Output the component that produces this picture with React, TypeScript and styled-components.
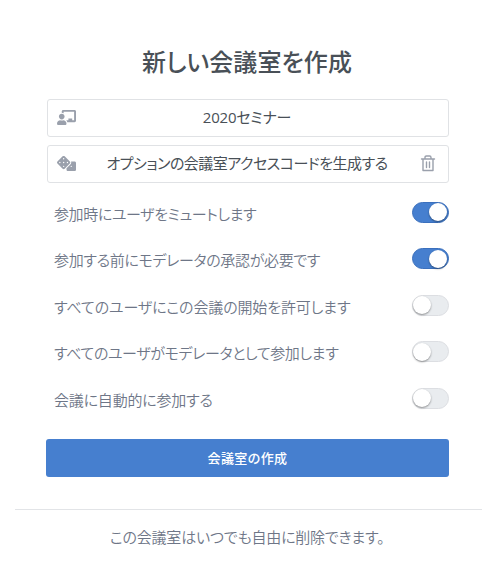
import React, { useState } from 'react';
import styled, { createGlobalStyle } from 'styled-components';
import { FaChalkboardTeacher, FaDice } from 'react-icons/fa';

const GlobalStyle = createGlobalStyle`
  * { box-sizing: border-box; }
  body {
    margin: 0;
    background: #fff;
    color: #495057;
    font-family: "Open Sans", "Noto Sans CJK JP", sans-serif;
    font-feature-settings: "palt";
  }
`;

const Dialog = styled.main`
  width: 494px;
  height: 571px;
  display: flex;
  flex-direction: column;
  overflow: hidden;
`;

const Title = styled.h1`
  margin: 42px 0 17px;
  height: 40px;
  line-height: 40px;
  font-size: 24px;
  font-weight: 500;
  text-align: center;
`;

const Text = styled.span<{ $tracking?: number }>`
  letter-spacing: ${(p) => p.$tracking ?? 0}px;
  white-space: nowrap;
`;

const Field = styled.div`
  display: grid;
  grid-template-columns: 36px 1fr 40px;
  align-items: center;
  width: 402px;
  height: 38px;
  margin: 0 0 8px 47px;
  border: 1px solid #e0e2e5;
  border-radius: 3px;
  font-size: 15px;
  text-align: center;

  ${Text} {
    padding: 0 0 3px 2px;
  }
`;

const FieldIcon = styled.span`
  display: flex;
  justify-content: center;
  padding-bottom: 1px;
  color: #9aa0ac;
`;

const Options = styled.div`
  display: grid;
  grid-auto-rows: 46.5px;
  margin: -2px 45px 0 54px;
`;

const Option = styled.label`
  display: flex;
  align-items: center;
  justify-content: space-between;
  font-size: 15px;
  font-weight: 350;
  color: #6e7687;

  ${Text} {
    padding-top: 2px;
  }
`;

const Switch = styled.button<{ $on: boolean }>`
  display: flex;
  align-items: center;
  justify-content: ${(p) => (p.$on ? 'flex-end' : 'flex-start')};
  width: 37px;
  height: 21px;
  padding: 0;
  border: 1px solid ${(p) => (p.$on ? '#3b70bd' : '#dcdee2')};
  border-radius: 11px;
  background: ${(p) => (p.$on ? '#467fcf' : '#e9ecef')};
`;

const Knob = styled.span`
  width: 18px;
  height: 18px;
  margin: 0 1px 0 0;
  border-radius: 50%;
  background: #fff;
  box-shadow: 0 1px 2px rgba(0, 0, 0, 0.4);
`;

const Submit = styled.button`
  width: 403px;
  height: 38px;
  margin: 17px 0 32px 46px;
  padding: 0 0 1px;
  border: 0;
  border-radius: 3px;
  background: #467fcf;
  color: #fff;
  font: 500 13px "Open Sans", "Noto Sans CJK JP", sans-serif;
`;

const Footer = styled.footer`
  margin: 0 14px 0 15px;
  margin-right: 12px;
  padding: 15px 3px 0 0;
  border-top: 1px solid #e2e4e7;
  line-height: 24px;
  font-size: 15px;
  font-weight: 350;
  color: #6e7687;
  text-align: center;
`;

const options = [
  { label: '参加時にユーザをミュートします', on: true, tracking: -0.4 },
  { label: '参加する前にモデレータの承認が必要です', on: true, tracking: -0.33 },
  { label: 'すべてのユーザにこの会議の開始を許可します', on: false, tracking: -0.12 },
  { label: 'すべてのユーザがモデレータとして参加します', on: false, tracking: -0.38 },
  { label: '会議に自動的に参加する', on: false, tracking: -0.2 },
];

function TrashIcon() {
  return (
    <svg width="16" height="17" viewBox="0 0 16 17" fill="none" stroke="currentColor" strokeWidth="1.4" strokeLinejoin="round" strokeLinecap="round">
      <path d="M1.5 4h13M3 4v11.5h10V4M5 4V2.4Q5 1 6.4 1h3.2Q11 1 11 2.4V4M6.5 7v5.5M9.5 7v5.5" />
    </svg>
  );
}

export default function App() {
  const [values, setValues] = useState(options.map((o) => o.on));
  const toggle = (index: number) =>
    setValues((current) => current.map((v, i) => (i === index ? !v : v)));

  return (
    <Dialog>
      <GlobalStyle />
      <Title><Text $tracking={0.1}>新しい会議室を作成</Text></Title>
      <Field>
        <FieldIcon><FaChalkboardTeacher size={19} /></FieldIcon>
        <Text $tracking={-0.2}>2020セミナー</Text>
        <span />
      </Field>
      <Field>
        <FieldIcon><FaDice size={19} /></FieldIcon>
        <Text $tracking={-0.5}>オプションの会議室アクセスコードを生成する</Text>
        <FieldIcon><TrashIcon /></FieldIcon>
      </Field>
      <Options>
        {options.map((option, i) => (
          <Option key={option.label}>
            <Text $tracking={option.tracking}>{option.label}</Text>
            <Switch $on={values[i]} role="switch" aria-checked={values[i]} onClick={() => toggle(i)}>
              <Knob />
            </Switch>
          </Option>
        ))}
      </Options>
      <Submit><Text $tracking={0.3}>会議室の作成</Text></Submit>
      <Footer><Text $tracking={-0.2}>この会議室はいつでも自由に削除できます。</Text></Footer>
    </Dialog>
  );
}
